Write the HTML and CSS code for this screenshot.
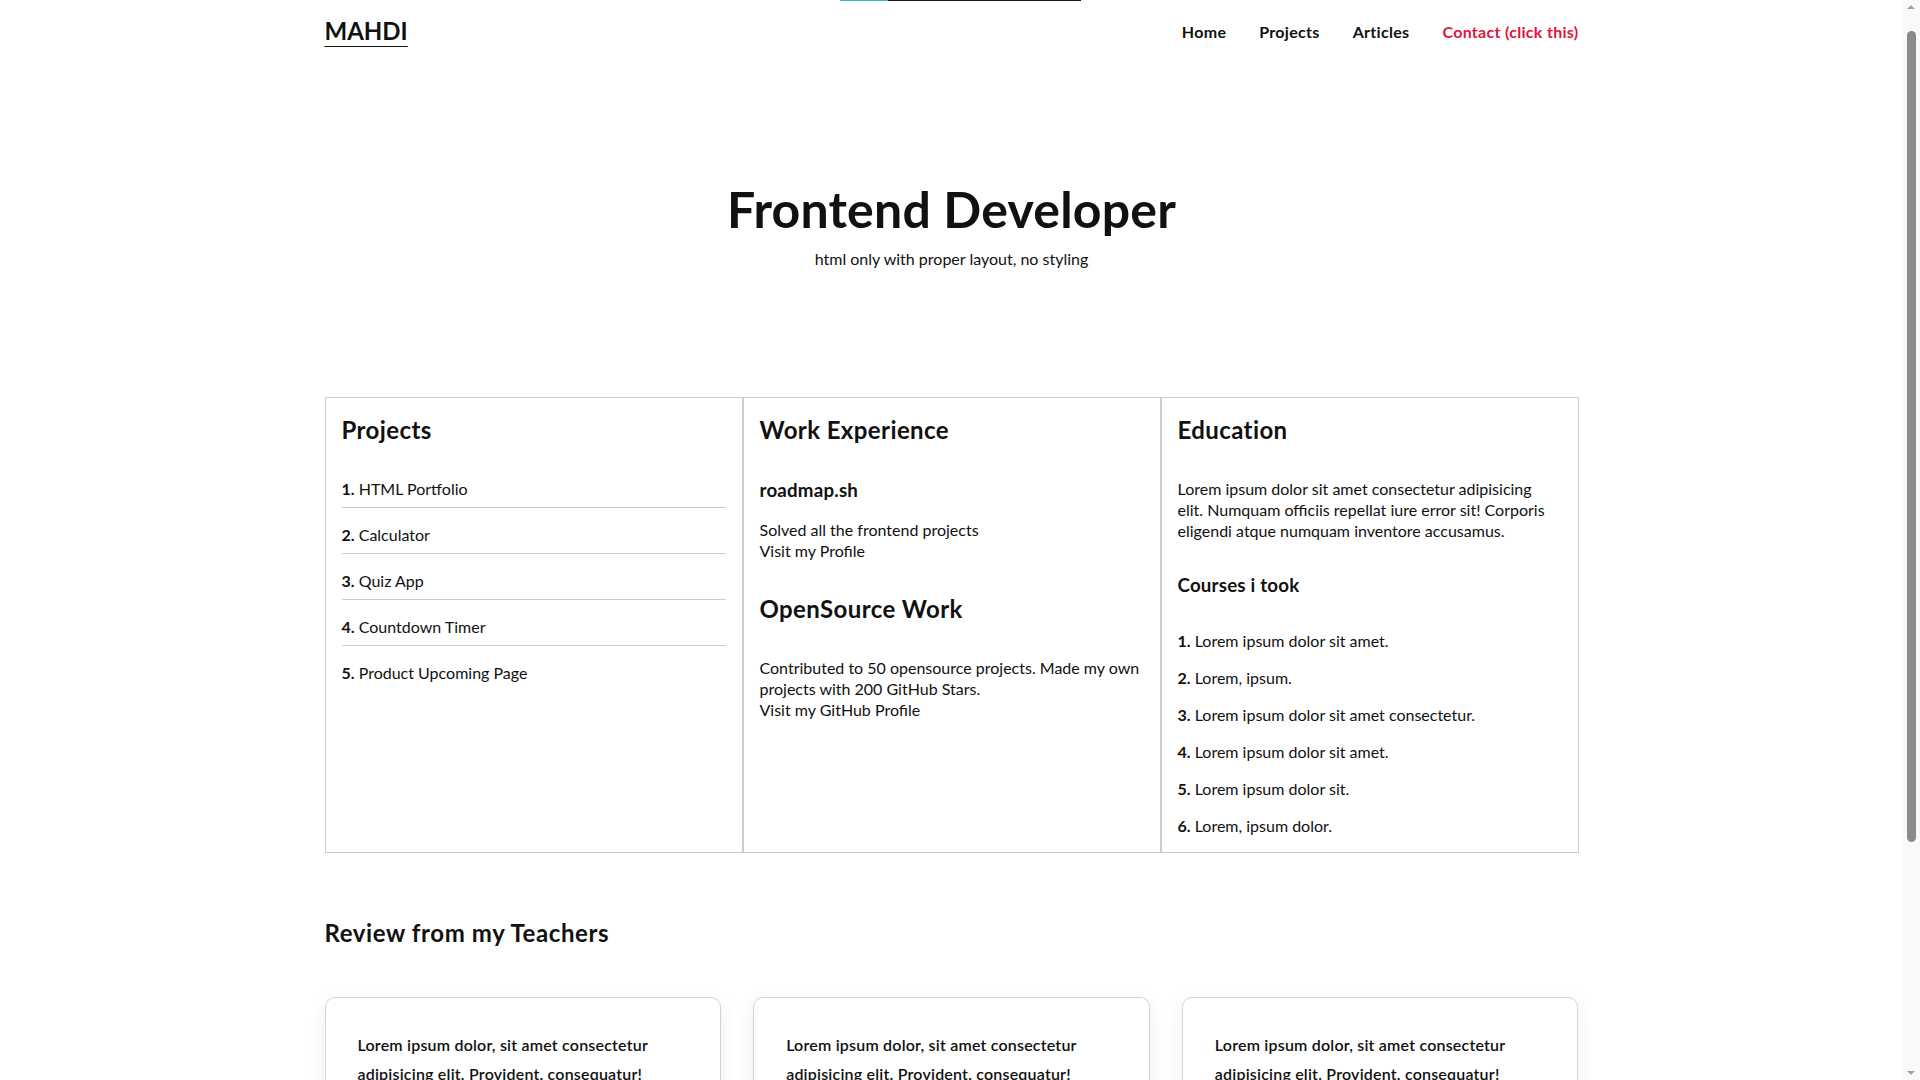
FILE: index.html
```html
<!DOCTYPE html>
<html lang="en">
<head>
<meta charset="utf-8">
<title>Mahdi - Frontend Developer</title>
<link rel="stylesheet" href="styles.css">
</head>
<body>
<div class="topbar"><span class="topbar-fill"></span></div>
<div class="scrollbar" aria-hidden="true">
  <span class="sb-arrow sb-up"></span>
  <span class="sb-thumb"></span>
  <span class="sb-arrow sb-down"></span>
</div>
<div class="container">
  <header class="site-header">
    <a class="logo" href="#">MAHDI</a>
    <nav class="nav">
      <a href="#">Home</a>
      <a href="#">Projects</a>
      <a href="#">Articles</a>
      <a href="#" class="contact">Contact (click this)</a>
    </nav>
  </header>

  <section class="hero">
    <h1>Frontend Developer</h1>
    <p>html only with proper layout, no styling</p>
  </section>

  <section class="grid">
    <div class="cell">
      <h2>Projects</h2>
      <ol class="proj-list">
        <li><b>1.</b> HTML Portfolio</li>
        <li><b>2.</b> Calculator</li>
        <li><b>3.</b> Quiz App</li>
        <li><b>4.</b> Countdown Timer</li>
        <li><b>5.</b> Product Upcoming Page</li>
      </ol>
    </div>
    <div class="cell">
      <h2>Work Experience</h2>
      <h3 class="job">roadmap.sh</h3>
      <p class="block">Solved all the frontend projects<br>Visit my Profile</p>
      <h2>OpenSource Work</h2>
      <p>Contributed to 50 opensource projects. Made my own projects with 200 GitHub Stars.<br>Visit my GitHub Profile</p>
    </div>
    <div class="cell">
      <h2>Education</h2>
      <p class="block edu-text">Lorem ipsum dolor sit amet consectetur adipisicing elit. Numquam officiis repellat iure error sit! Corporis eligendi atque numquam inventore accusamus.</p>
      <h3 class="courses-title">Courses i took</h3>
      <ol class="course-list">
        <li><b>1.</b> Lorem ipsum dolor sit amet.</li>
        <li><b>2.</b> Lorem, ipsum.</li>
        <li><b>3.</b> Lorem ipsum dolor sit amet consectetur.</li>
        <li><b>4.</b> Lorem ipsum dolor sit amet.</li>
        <li><b>5.</b> Lorem ipsum dolor sit.</li>
        <li><b>6.</b> Lorem, ipsum dolor.</li>
      </ol>
    </div>
  </section>

  <section class="reviews">
    <h2>Review from my Teachers</h2>
    <div class="cards">
      <div class="card"><p>Lorem ipsum dolor, sit amet consectetur adipisicing elit. Provident, consequatur! Officiis, nemo. Quibusdam, voluptates.</p></div>
      <div class="card"><p>Lorem ipsum dolor, sit amet consectetur adipisicing elit. Provident, consequatur! Officiis, nemo. Quibusdam, voluptates.</p></div>
      <div class="card"><p>Lorem ipsum dolor, sit amet consectetur adipisicing elit. Provident, consequatur! Officiis, nemo. Quibusdam, voluptates.</p></div>
    </div>
  </section>
</div>
</body>
</html>
```

FILE: styles.css
```css
* {
  box-sizing: border-box;
}

html, body {
  margin: 0;
  padding: 0;
  background: #ffffff;
}

body {
  font-family: "Lato", "Open Sans", "Liberation Sans", sans-serif;
  font-size: 16px;
  line-height: 21px;
  color: #111111;
  padding-right: 17px;
}

/* thin loading line at the very top */
.topbar {
  position: fixed;
  top: 0;
  left: 840px;
  width: 241px;
  height: 1px;
  background: #1a1a1a;
  z-index: 10;
}

.topbar-fill {
  display: block;
  width: 48px;
  height: 100%;
  background: #25bcd2;
}

/* classic window scrollbar */
.scrollbar {
  position: fixed;
  top: 0;
  right: 0;
  width: 17px;
  height: 100vh;
  background: #f9f9f9;
  z-index: 20;
}

.sb-thumb {
  position: absolute;
  left: 4px;
  top: 31px;
  width: 9px;
  height: 811px;
  border-radius: 5px;
  background: #8b8b8b;
}

.sb-arrow {
  position: absolute;
  left: 4px;
  width: 0;
  height: 0;
  border-left: 4.5px solid transparent;
  border-right: 4.5px solid transparent;
}

.sb-up {
  top: 5px;
  border-bottom: 4px solid #a3a3a3;
}

.sb-down {
  bottom: 5px;
  border-top: 4px solid #a3a3a3;
}

.container {
  width: 1254px;
  margin: 0 auto;
}

/* Header */
.site-header {
  display: flex;
  justify-content: space-between;
  align-items: center;
  padding: 15px 0;
}

.logo {
  font-size: 24px;
  line-height: 32px;
  font-weight: 700;
  color: #111111;
  text-decoration: underline;
  text-decoration-thickness: 1px;
  text-underline-offset: 6px;
}

.nav {
  display: flex;
  gap: 33px;
}

.nav a {
  font-size: 16px;
  font-weight: 700;
  letter-spacing: 0.3px;
  color: #111111;
  text-decoration: none;
}

.nav a.contact {
  color: #e0143c;
}

/* Hero */
.hero {
  text-align: center;
  padding-top: 117px;
  padding-bottom: 128px;
}

.hero h1 {
  margin: 0;
  font-size: 50px;
  line-height: 60px;
  font-weight: 700;
  letter-spacing: 0.2px;
}

.hero p {
  margin: 9px 0 0;
}

/* Grid */
.grid {
  display: grid;
  grid-template-columns: repeat(3, 1fr);
}

.cell {
  border: 1px solid #cccccc;
  padding: 16px 16px 0;
}

.cell h2 {
  margin: 0 0 32px;
  font-size: 24px;
  line-height: 32px;
  font-weight: 700;
  letter-spacing: 0.4px;
}

.cell h3 {
  margin: 0;
  font-size: 18.72px;
  line-height: 25px;
  font-weight: 700;
  letter-spacing: 0.2px;
}

.cell p {
  margin: 0;
}

.cell p.block {
  margin-bottom: 32px;
}

.edu-text {
  max-width: 376px;
}

.job {
  margin-bottom: 16px !important;
}

.courses-title {
  margin-bottom: 32px !important;
}

.proj-list,
.course-list {
  list-style: none;
  margin: 0;
  padding: 0;
}

.proj-list li {
  padding-bottom: 8px;
  margin-bottom: 16px;
  border-bottom: 1px solid #cccccc;
}

.proj-list li:last-child {
  border-bottom: none;
}

.course-list li {
  margin-bottom: 16px;
}

/* Reviews */
.reviews {
  padding-top: 64px;
}

.reviews h2 {
  margin: 0 0 48px;
  font-size: 24px;
  line-height: 32px;
  font-weight: 700;
  letter-spacing: 0.6px;
}

.cards {
  display: grid;
  grid-template-columns: repeat(3, 1fr);
  gap: 32px;
  padding-bottom: 40px;
}

.card {
  border: 1px solid #d4d4d4;
  border-radius: 10px;
  padding: 32px;
  box-shadow: 0 4px 18px rgba(0, 0, 0, 0.07);
}

.card p {
  margin: 0;
  font-weight: 600;
  line-height: 29px;
  letter-spacing: 0.2px;
}
```
